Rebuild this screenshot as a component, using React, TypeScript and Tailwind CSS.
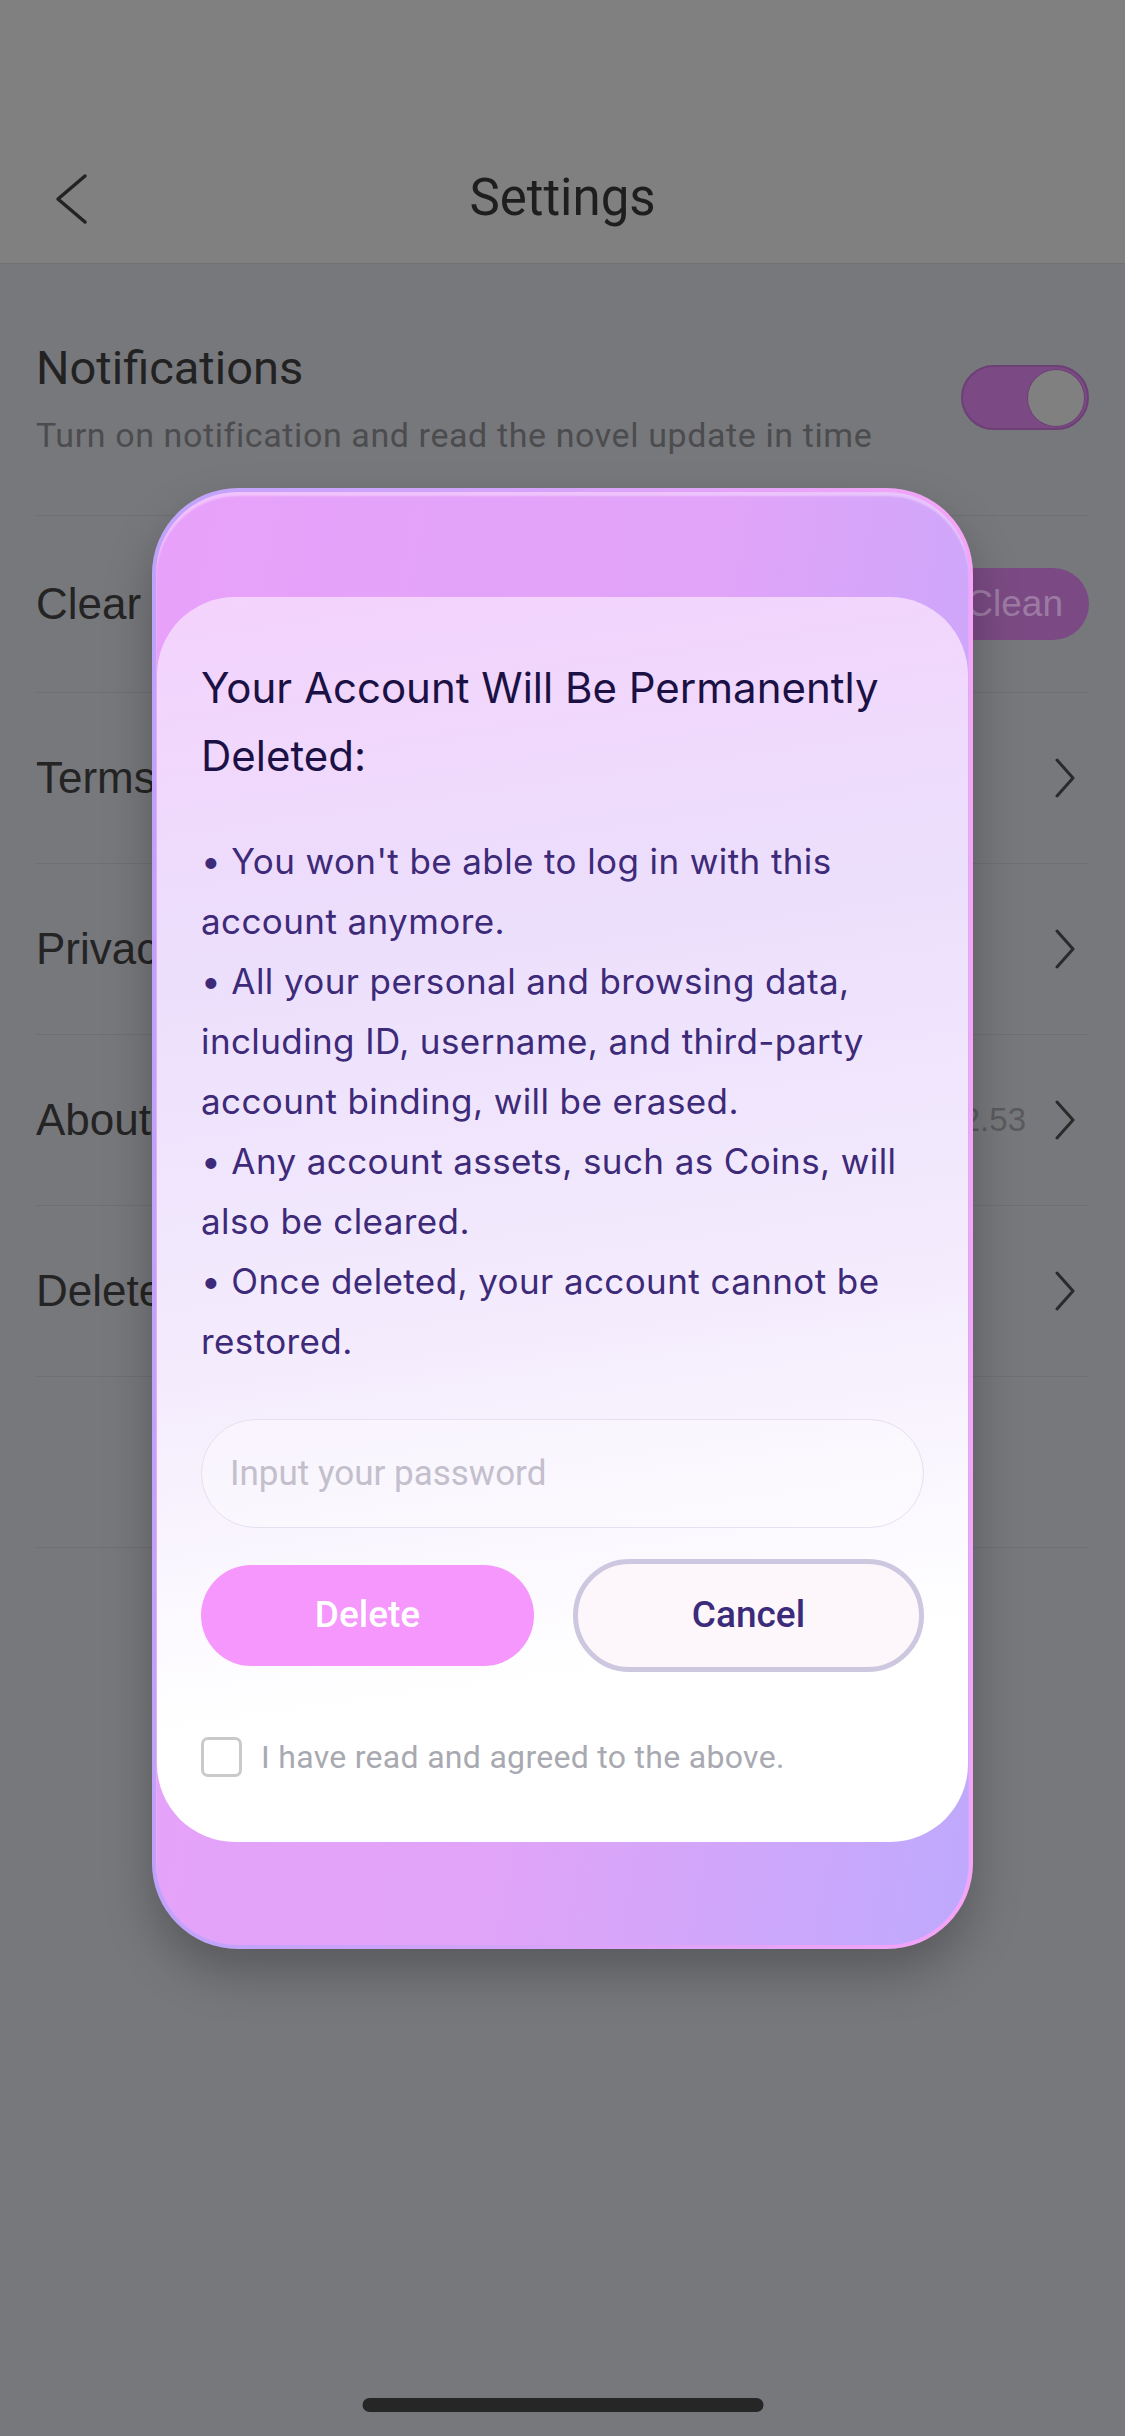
import { useState } from "react";

const rows = [
  { label: "Clear Cache", kind: "clean" },
  { label: "Terms of Service", kind: "link" },
  { label: "Privacy Policy", kind: "link" },
  { label: "About Us", kind: "version" },
  { label: "Delete Account", kind: "link" },
];

const bullets = [
  "• You won't be able to log in with this account anymore.",
  "• All your personal and browsing data, including ID, username, and third-party account binding, will be erased.",
  "• Any account assets, such as Coins, will also be cleared.",
  "• Once deleted, your account cannot be restored.",
];

function ChevronRight() {
  return (
    <svg width="22" height="40" viewBox="0 0 22 40" fill="none">
      <path d="M3 2 L19 20 L3 38" stroke="#2a2a2a" strokeWidth="3" strokeLinecap="round" strokeLinejoin="round" />
    </svg>
  );
}

function SettingsPage() {
  return (
    <div className="flex flex-col">
      {/* Nav bar */}
      <header className="h-[264px] bg-[#808080] border-b border-[#727276] pt-[134px]">
        <div className="relative h-[129px] flex items-center justify-center">
          <button className="absolute left-[52px] top-1/2 -translate-y-1/2">
            <svg width="38" height="52" viewBox="0 0 38 52" fill="none">
              <path d="M33 3 L6 26 L33 49" stroke="#232323" strokeWidth="3.5" strokeLinecap="round" strokeLinejoin="round" />
            </svg>
          </button>
          <h1 className="text-[51px] text-[#1e1e1e] font-['Roboto',sans-serif]">Settings</h1>
        </div>
      </header>

      <div className="px-[36px]">
        {/* Notifications */}
        <div className="h-[252px] flex items-center justify-between border-b border-[#6f7074] pt-[16px]">
          <div className="flex flex-col gap-[20px] font-['Roboto',sans-serif]">
            <span className="text-[47px] leading-[54px] text-[#222]">Notifications</span>
            <span className="text-[34px] leading-[40px] tracking-[0.6px] text-[#4c4c4f]">
              Turn on notification and read the novel update in time
            </span>
          </div>
          <div className="w-[128px] h-[65px] rounded-full bg-[#7b4a84] border-2 border-[#6c3f75] flex items-center justify-end p-[2px]">
            <div className="w-[58px] h-[58px] rounded-full bg-[#808080] border border-[#6c3f75]" />
          </div>
        </div>

        {rows.map((r, i) => (
          <div
            key={r.label}
            className={`flex items-center justify-between border-b border-[#6f7074] ${i === 0 ? "h-[177px]" : "h-[171px]"}`}
          >
            <span className="text-[44px] text-[#242424] font-['Liberation_Sans',Arial,sans-serif]">{r.label}</span>
            {r.kind === "clean" && (
              <span className="h-[72px] px-[26px] rounded-full bg-[#7b4a84] text-[37px] text-[#9c7ba3] flex items-center font-['Liberation_Sans',Arial,sans-serif]">
                Clean
              </span>
            )}
            {r.kind === "link" && (
              <span className="pr-[13px]">
                <ChevronRight />
              </span>
            )}
            {r.kind === "version" && (
              <div className="flex items-center gap-[28px] pr-[13px]">
                <span className="text-[33px] text-[#5b5b5e] font-['Liberation_Sans',Arial,sans-serif]">V1.2.53</span>
                <ChevronRight />
              </div>
            )}
          </div>
        ))}

        <div className="h-[171px] flex items-center justify-center border-b border-[#6f7074]">
          <span className="text-[40px] text-[#242424] font-['Liberation_Sans',Arial,sans-serif]">Log Out</span>
        </div>
      </div>
    </div>
  );
}

function DeleteDialog() {
  const [agreed, setAgreed] = useState(false);
  return (
    <div className="absolute inset-0 flex items-center justify-center">
      <div className="w-[821px] rounded-[86px] p-[4px] bg-[linear-gradient(90deg,#bfa3fb_0%,#d7a4fa_50%,#f5a4f7_100%)] shadow-[0_24px_48px_rgba(0,0,0,0.25)]">
        <div className="rounded-[82px] px-[1px] pt-[105px] pb-[103px] bg-[linear-gradient(100deg,#e8a1fa_0%,#e0a4f9_55%,#bea9fc_100%)] shadow-[inset_0_4px_2px_rgba(255,235,255,0.45)]">
          <div className="rounded-[78px] pt-[57px] pb-[61px] px-[44px] bg-[linear-gradient(172deg,#f4d2fc_0%,#ecdffc_28%,#f4ecfd_58%,#ffffff_84%)]">
            <h2 className="text-[42px] leading-[68px] text-[#1b1145] font-['Inter',sans-serif]">
              Your Account Will Be Permanently Deleted:
            </h2>

            <div className="mt-[41px] mr-[-16px] font-['Inter',sans-serif] text-[35px] leading-[60px] text-[#3d2a78] tracking-[0.4px]">
              {bullets.map((b) => (
                <p key={b}>{b}</p>
              ))}
            </div>

            <input
              type="password"
              placeholder="Input your password"
              className="mt-[48px] w-full h-[109px] rounded-full border-[1.5px] border-[#e6e0ef] bg-white/30 px-[28px] text-[35px] text-[#3d2a78] placeholder:text-[#c3bfcc] outline-none font-['Roboto',sans-serif]"
            />

            <div className="mt-[31px] h-[113px] flex items-center justify-between font-['Roboto',sans-serif]">
              <button className="w-[333px] h-[101px] rounded-full bg-[#f597fc] text-white text-[37px] font-medium">
                Delete
              </button>
              <button className="w-[351px] h-[113px] rounded-full border-[5px] border-[#cdc7e0] bg-[#fdf7fc] text-[#3b2b7a] text-[37px] font-medium">
                Cancel
              </button>
            </div>

            <label className="mt-[61px] flex items-center gap-[19px] font-['Roboto',sans-serif] cursor-pointer">
              <span
                onClick={() => setAgreed(!agreed)}
                className={`w-[41px] h-[40px] rounded-[7px] border-[3px] ${agreed ? "border-[#f597fc] bg-[#f597fc]" : "border-[#cacaca]"}`}
              />
              <span className="text-[32px] tracking-[0.3px] text-[#a9a9b1]">I have read and agreed to the above.</span>
            </label>
          </div>
        </div>
      </div>
    </div>
  );
}

export default function App() {
  return (
    <div className="relative w-[1125px] h-[2436px] overflow-hidden bg-[#77787c]">
      <SettingsPage />
      <DeleteDialog />
      {/* Home indicator */}
      <div className="absolute bottom-[24px] left-1/2 -translate-x-1/2 w-[401px] h-[14px] rounded-full bg-[#262626]" />
    </div>
  );
}
